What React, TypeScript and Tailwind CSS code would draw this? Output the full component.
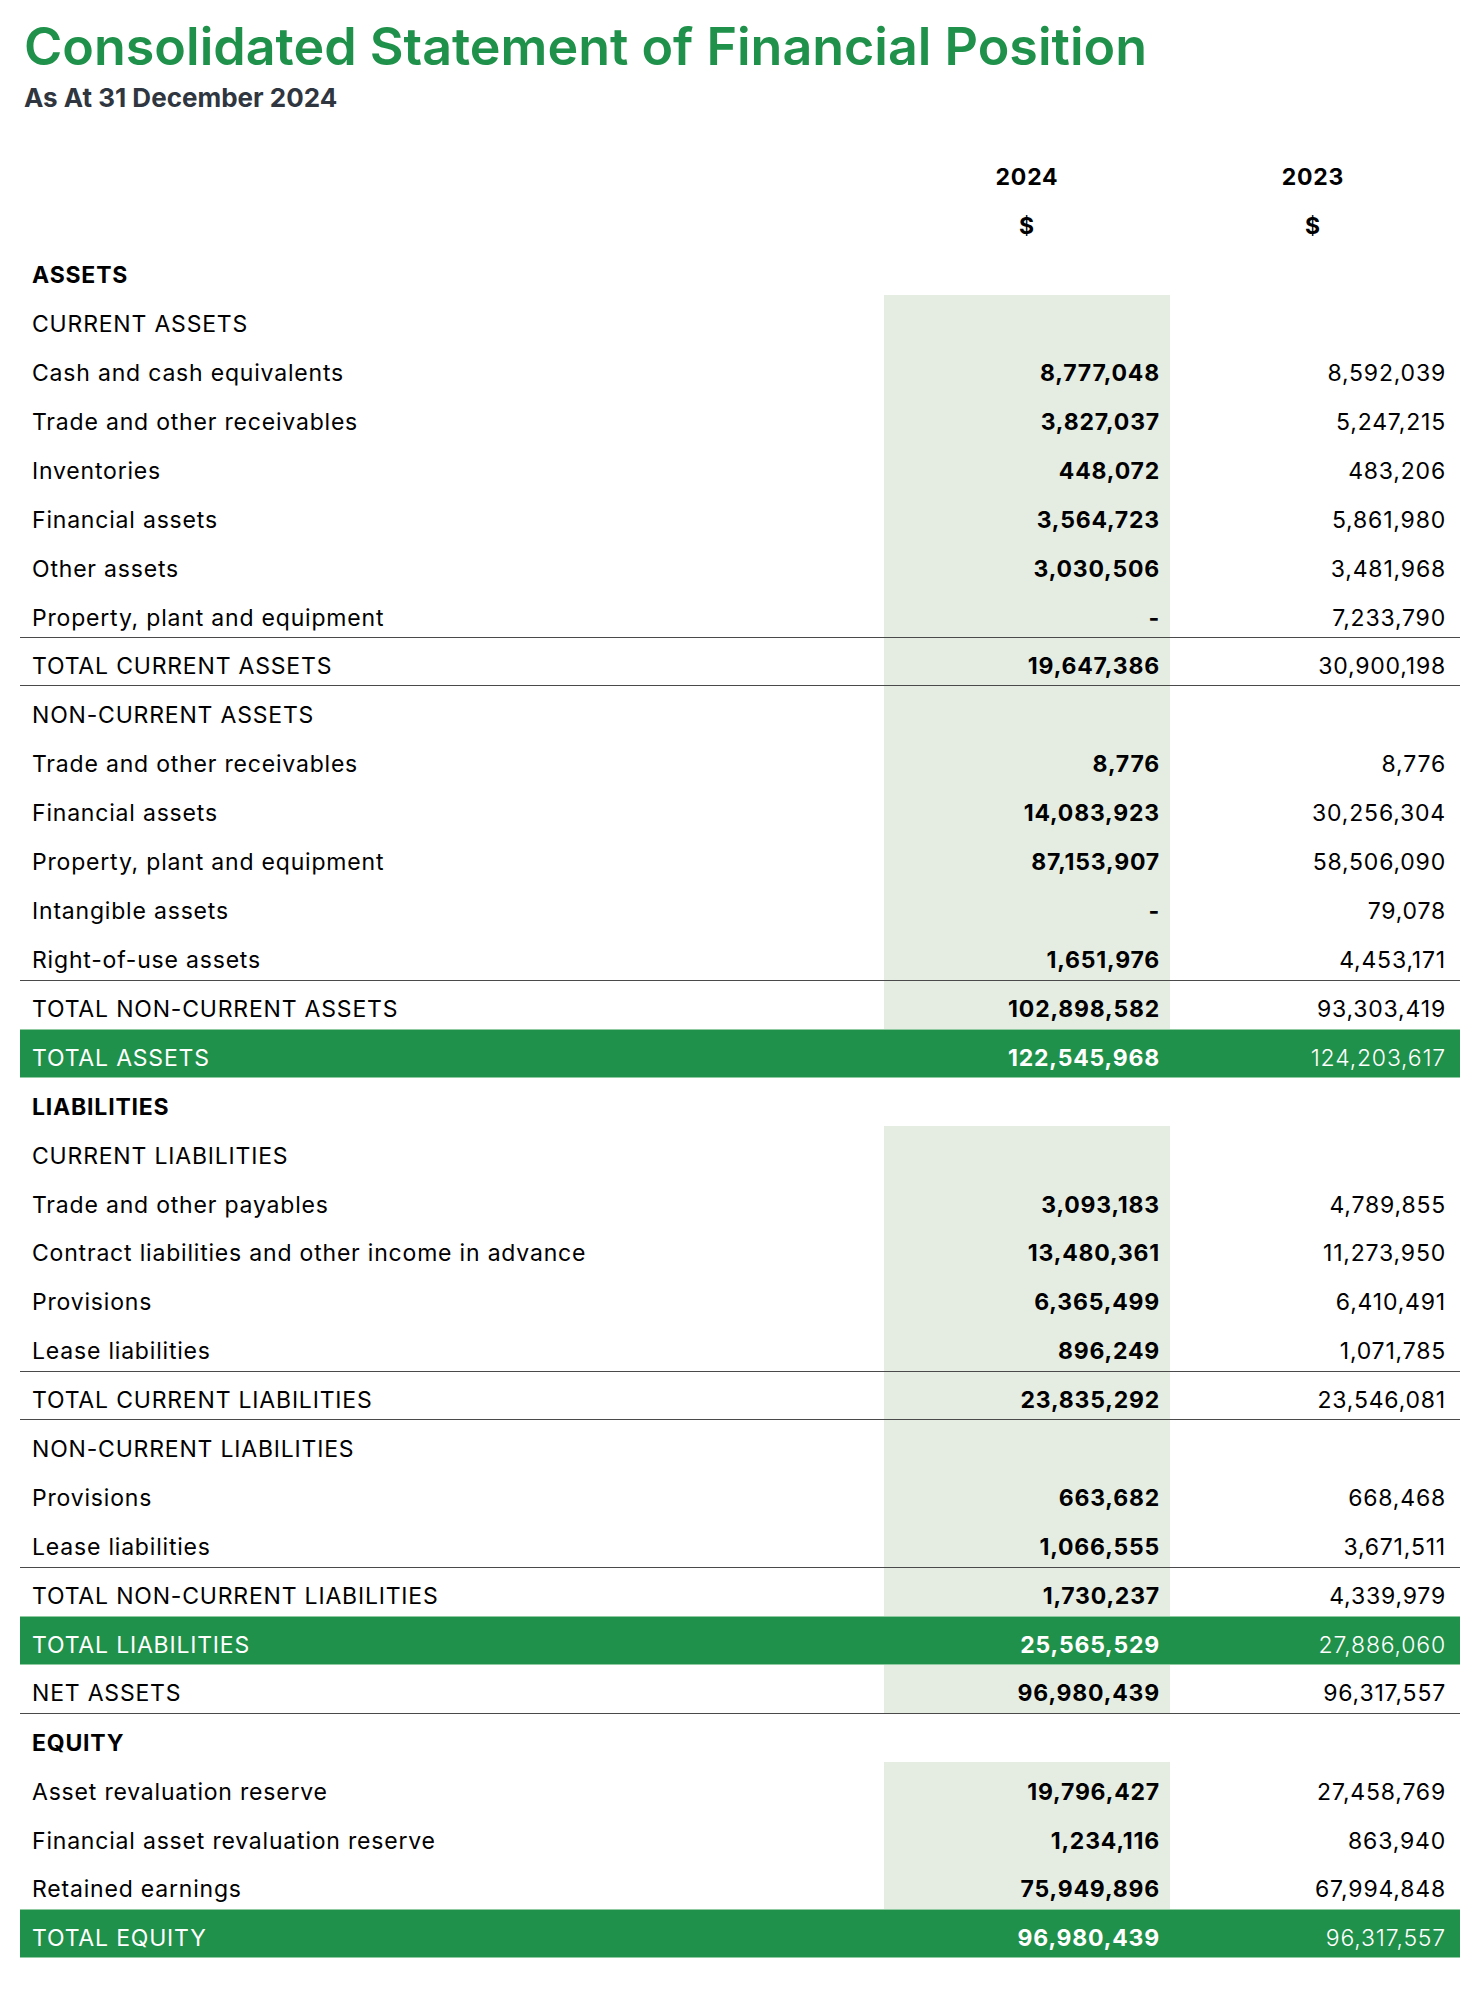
import React from 'react'

type RowKind = 'section' | 'group' | 'item' | 'total' | 'grand'

interface Row {
  kind: RowKind
  label: string
  cur?: string
  prev?: string
  lineTop?: boolean
  lineBottom?: boolean
}

const rows: Row[] = [
  { kind: 'section', label: 'ASSETS' },
  { kind: 'group', label: 'CURRENT ASSETS' },
  { kind: 'item', label: 'Cash and cash equivalents', cur: '8,777,048', prev: '8,592,039' },
  { kind: 'item', label: 'Trade and other receivables', cur: '3,827,037', prev: '5,247,215' },
  { kind: 'item', label: 'Inventories', cur: '448,072', prev: '483,206' },
  { kind: 'item', label: 'Financial assets', cur: '3,564,723', prev: '5,861,980' },
  { kind: 'item', label: 'Other assets', cur: '3,030,506', prev: '3,481,968' },
  { kind: 'item', label: 'Property, plant and equipment', cur: '-', prev: '7,233,790' },
  { kind: 'total', label: 'TOTAL CURRENT ASSETS', cur: '19,647,386', prev: '30,900,198', lineTop: true, lineBottom: true },
  { kind: 'group', label: 'NON-CURRENT ASSETS' },
  { kind: 'item', label: 'Trade and other receivables', cur: '8,776', prev: '8,776' },
  { kind: 'item', label: 'Financial assets', cur: '14,083,923', prev: '30,256,304' },
  { kind: 'item', label: 'Property, plant and equipment', cur: '87,153,907', prev: '58,506,090' },
  { kind: 'item', label: 'Intangible assets', cur: '-', prev: '79,078' },
  { kind: 'item', label: 'Right-of-use assets', cur: '1,651,976', prev: '4,453,171' },
  { kind: 'total', label: 'TOTAL NON-CURRENT ASSETS', cur: '102,898,582', prev: '93,303,419', lineTop: true },
  { kind: 'grand', label: 'TOTAL ASSETS', cur: '122,545,968', prev: '124,203,617' },
  { kind: 'section', label: 'LIABILITIES' },
  { kind: 'group', label: 'CURRENT LIABILITIES' },
  { kind: 'item', label: 'Trade and other payables', cur: '3,093,183', prev: '4,789,855' },
  { kind: 'item', label: 'Contract liabilities and other income in advance', cur: '13,480,361', prev: '11,273,950' },
  { kind: 'item', label: 'Provisions', cur: '6,365,499', prev: '6,410,491' },
  { kind: 'item', label: 'Lease liabilities', cur: '896,249', prev: '1,071,785' },
  { kind: 'total', label: 'TOTAL CURRENT LIABILITIES', cur: '23,835,292', prev: '23,546,081', lineTop: true, lineBottom: true },
  { kind: 'group', label: 'NON-CURRENT LIABILITIES' },
  { kind: 'item', label: 'Provisions', cur: '663,682', prev: '668,468' },
  { kind: 'item', label: 'Lease liabilities', cur: '1,066,555', prev: '3,671,511' },
  { kind: 'total', label: 'TOTAL NON-CURRENT LIABILITIES', cur: '1,730,237', prev: '4,339,979', lineTop: true },
  { kind: 'grand', label: 'TOTAL LIABILITIES', cur: '25,565,529', prev: '27,886,060' },
  { kind: 'total', label: 'NET ASSETS', cur: '96,980,439', prev: '96,317,557', lineBottom: true },
  { kind: 'section', label: 'EQUITY' },
  { kind: 'item', label: 'Asset revaluation reserve', cur: '19,796,427', prev: '27,458,769' },
  { kind: 'item', label: 'Financial asset revaluation reserve', cur: '1,234,116', prev: '863,940' },
  { kind: 'item', label: 'Retained earnings', cur: '75,949,896', prev: '67,994,848' },
  { kind: 'grand', label: 'TOTAL EQUITY', cur: '96,980,439', prev: '96,317,557' },
]

function StatementRow({ row }: { row: Row }) {
  const grand = row.kind === 'grand'
  const section = row.kind === 'section'

  // borders sit on the whole row, shading only on the 2024 column
  const rowLine = grand
    ? 'bg-[#1f914a] border-y border-[#8fcaa1] text-white'
    : `${row.lineTop ? 'border-t' : ''} ${row.lineBottom ? 'border-b' : ''} border-[#4a4a4a] text-black`

  return (
    <div className={`grid grid-cols-[864px_286px_286px] h-[48.93px] items-stretch ${rowLine}`}>
      <div className={`flex items-center pl-3 pt-[10px] ${section ? 'font-bold' : 'font-normal'}`}>{row.label}</div>
      <div
        className={`flex items-center justify-end pr-[10px] pt-[10px] font-bold ${
          grand || section ? '' : 'bg-[#e5ede3]'
        }`}
      >
        {row.cur}
      </div>
      <div className={`flex items-center justify-end pr-[10px] pt-[10px] ${grand ? 'font-light' : 'font-normal'}`}>
        {row.prev}
      </div>
    </div>
  )
}

export default function App() {
  return (
    <div className="w-[1480px] min-h-[2000px] bg-white px-5 pt-4 font-['Inter','Liberation_Sans',sans-serif]">
      <h1 className="pl-1 text-[52px] leading-[62px] font-semibold text-[#1f914a]">
        Consolidated Statement of Financial Position
      </h1>
      <p className="pl-1 mt-1 text-[26px] leading-[32px] font-bold text-[#2f3640]">As At 31 December 2024</p>

      <div className="mt-[34px] text-[23px] tracking-[0.035em]">
        <div className="grid grid-cols-[864px_286px_286px] h-[48.93px] items-center pt-[10px] font-bold text-black">
          <div />
          <div className="text-center">2024</div>
          <div className="text-center">2023</div>
        </div>
        <div className="grid grid-cols-[864px_286px_286px] h-[48.93px] items-center pt-[10px] font-bold text-black">
          <div />
          <div className="text-center">$</div>
          <div className="text-center">$</div>
        </div>
        {rows.map((row, i) => (
          <StatementRow key={i} row={row} />
        ))}
      </div>
    </div>
  )
}
